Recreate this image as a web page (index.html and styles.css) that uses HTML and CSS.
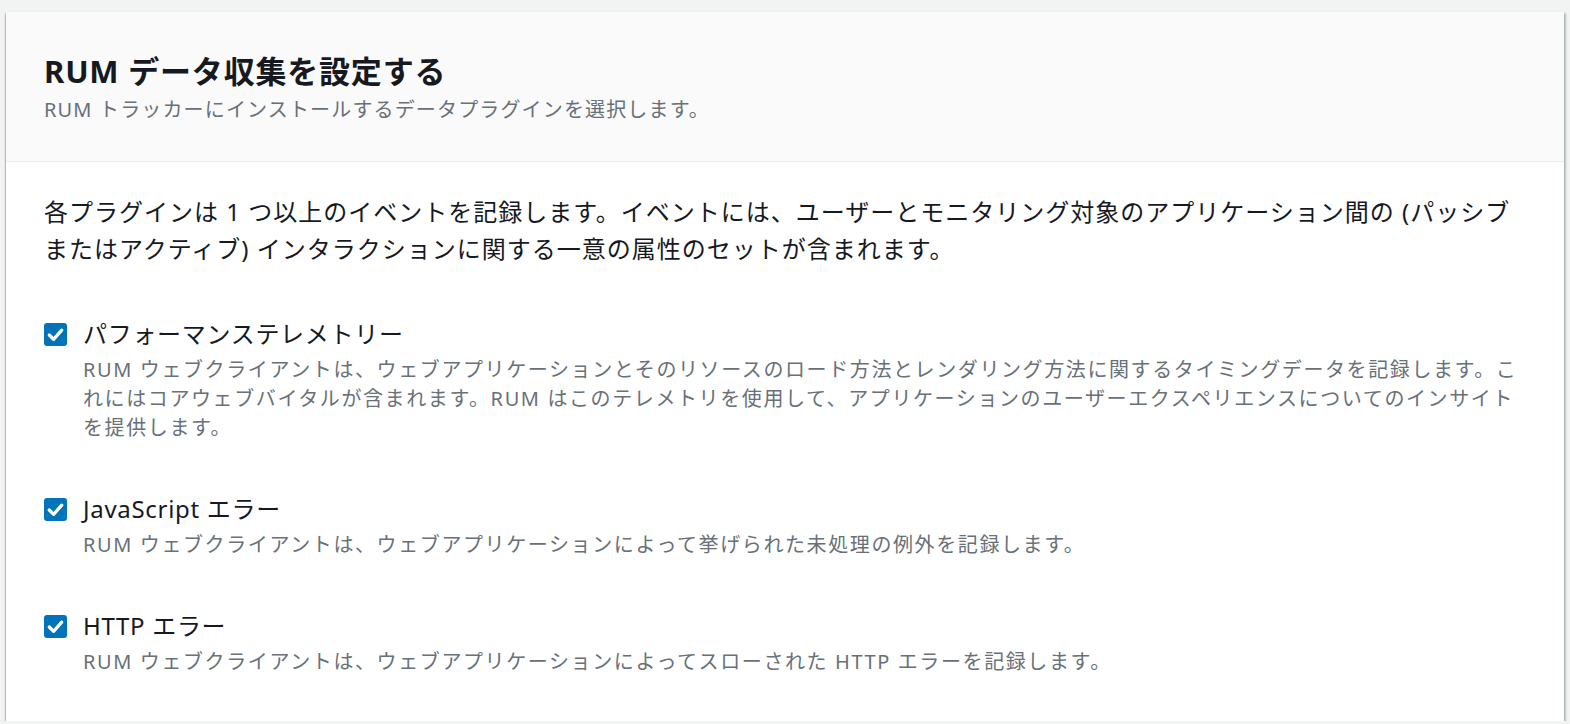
FILE: index.html
```html
<!DOCTYPE html>
<html lang="ja">
<head>
    <meta charset="utf-8">
    <title>RUM データ収集を設定する</title>
    <link rel="stylesheet" href="styles.css">
</head>
<body>
    <div class="container">
        <div class="container-header">
            <h2 class="title">RUM データ収集を設定する</h2>
            <p class="subtitle">RUM トラッカーにインストールするデータプラグインを選択します。</p>
        </div>

        <div class="container-body">
            <p class="intro">各プラグインは 1 つ以上のイベントを記録します。イベントには、ユーザーとモニタリング対象のアプリケーション間の (パッシブまたはアクティブ) インタラクションに関する一意の属性のセットが含まれます。</p>

            <div class="plugin">
                <div class="plugin-row">
                    <span class="checkbox">
                        <svg viewBox="0 0 24 24" width="23" height="23"><polyline points="5.5,12.5 10,17 18.5,7.5" fill="none" stroke="#fff" stroke-width="3.4" stroke-linecap="round" stroke-linejoin="round"/></svg>
                    </span>
                    <span class="plugin-label">パフォーマンステレメトリー</span>
                </div>
                <p class="plugin-desc">RUM ウェブクライアントは、ウェブアプリケーションとそのリソースのロード方法とレンダリング方法に関するタイミングデータを記録します。これにはコアウェブバイタルが含まれます。RUM はこのテレメトリを使用して、アプリケーションのユーザーエクスペリエンスについてのインサイトを提供します。</p>
            </div>

            <div class="plugin">
                <div class="plugin-row">
                    <span class="checkbox">
                        <svg viewBox="0 0 24 24" width="23" height="23"><polyline points="5.5,12.5 10,17 18.5,7.5" fill="none" stroke="#fff" stroke-width="3.4" stroke-linecap="round" stroke-linejoin="round"/></svg>
                    </span>
                    <span class="plugin-label">JavaScript エラー</span>
                </div>
                <p class="plugin-desc">RUM ウェブクライアントは、ウェブアプリケーションによって挙げられた未処理の例外を記録します。</p>
            </div>

            <div class="plugin">
                <div class="plugin-row">
                    <span class="checkbox">
                        <svg viewBox="0 0 24 24" width="23" height="23"><polyline points="5.5,12.5 10,17 18.5,7.5" fill="none" stroke="#fff" stroke-width="3.4" stroke-linecap="round" stroke-linejoin="round"/></svg>
                    </span>
                    <span class="plugin-label">HTTP エラー</span>
                </div>
                <p class="plugin-desc">RUM ウェブクライアントは、ウェブアプリケーションによってスローされた HTTP エラーを記録します。</p>
            </div>
        </div>
    </div>
</body>
</html>
```

FILE: styles.css
```css
body {
    font-family: "Noto Sans", "Noto Sans CJK JP", sans-serif;
    background-color: #f2f3f3;
    color: #16191f;
    margin: 0;
    padding: 12px 6px 0 6px;
}

.container {
    background-color: #fff;
    box-shadow: 0 2px 2px 0 rgba(0, 28, 36, 0.35), 2px 1px 2px 0 rgba(0, 28, 36, 0.2), -1px 1px 1px 0 rgba(0, 28, 36, 0.15);
}

.container-header {
    background-color: #fafafa;
    border-bottom: 1px solid #eaeded;
    padding: 39px 38px 37px 38px;
}

.title {
    font-size: 31px;
    line-height: 40px;
    font-weight: 700;
    letter-spacing: 0.8px;
    margin: 0 0 4px 0;
}

.subtitle {
    font-size: 20px;
    line-height: 29px;
    letter-spacing: 1.15px;
    color: #687078;
    margin: 0;
}

.container-body {
    padding: 31px 38px 45px 38px;
}

.intro {
    font-size: 24px;
    line-height: 37px;
    letter-spacing: 1px;
    margin: 0 0 49px 0;
}

.plugin {
    margin-bottom: 49px;
}

.plugin:last-child {
    margin-bottom: 0;
}

.plugin-row {
    display: flex;
    align-items: center;
    gap: 16px;
}

.checkbox {
    width: 23px;
    height: 23px;
    background-color: #0073bb;
    border-radius: 3px;
    display: flex;
    flex-shrink: 0;
}

.plugin-label {
    font-size: 24px;
    line-height: 36px;
    letter-spacing: 0.7px;
}

.plugin-desc {
    font-size: 20px;
    line-height: 29px;
    letter-spacing: 1.6px;
    color: #687078;
    margin: 3px 0 0 39px;
}
```
